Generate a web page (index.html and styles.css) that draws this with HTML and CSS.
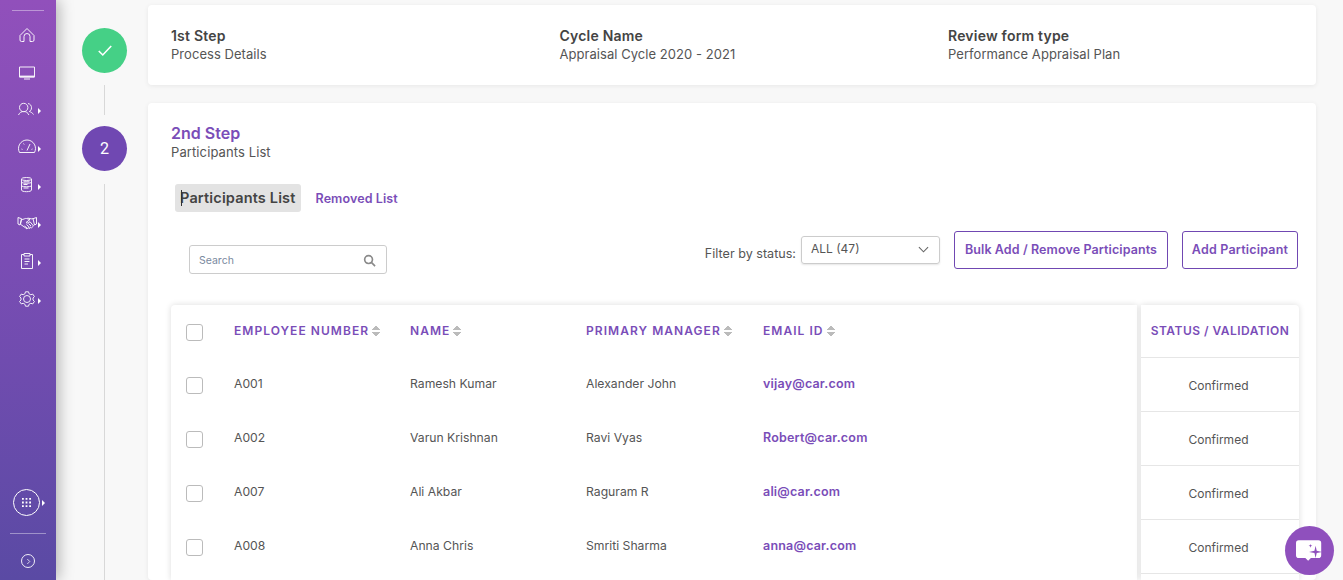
FILE: index.html
```html
<!DOCTYPE html>
<html lang="en">
<head>
<meta charset="utf-8">
<title>Participants</title>
<link rel="stylesheet" href="styles.css">
</head>
<body>
<div class="app">
  <nav class="sidebar">
    <div class="rule rule-top"></div>
    <ul class="nav-list">
      <li class="nav-item"><svg class="ico" viewBox="0 0 20 20"><path d="M3 10.500 10 3.500l7 7V15a1.500 1.500 0 0 1-1.500 1.500H13v-5a3 3 0 0 0-6 0v5H4.500A1.500 1.500 0 0 1 3 15z"/></svg></li>
      <li class="nav-item"><svg class="ico" viewBox="0 0 20 20"><path d="M2.500 4h15v10h-15z"/><path class="thick" d="M2.500 13.500h15"/><path d="M7 16h6"/></svg></li>
      <li class="nav-item has-sub"><svg class="ico" viewBox="0 0 20 20"><circle cx="6.700" cy="6.500" r="4.200"/><path d="M1.500 14c1-2.500 3-3.500 5.200-3.500s4.200 1 5.200 3.500M11 2.500c2.500.5 3.500 2.300 3.500 4.300s-1 3.200-2.200 3.700c1.800.5 3.200 1.500 4.200 3"/></svg><span class="caret"></span></li>
      <li class="nav-item has-sub"><svg class="ico" viewBox="0 0 20 20"><path d="M2.500 13.500A8.500 8.500 0 1 1 17.500 13.500z"/><path d="M10 11.500 13 5M4.500 10l1 .4M6.500 4.500l.7 1M15.500 10l-1 .4"/></svg><span class="caret"></span></li>
      <li class="nav-item has-sub"><svg class="ico" viewBox="0 0 20 20"><ellipse cx="9.500" cy="2" rx="5" ry="1.500"/><path d="M4.500 2v11c0 1 2.200 1.700 5 1.700s5-.7 5-1.700V2M4.500 5.500c1.500 1 8.500 1 10 0M4.500 9c1.500 1 8.500 1 10 0M6.500 7.500h4M6.500 4.800h6M6.500 11h5"/></svg><span class="caret"></span></li>
      <li class="nav-item has-sub"><svg class="ico" viewBox="0 0 20 20"><path d="M1 2.500l3.500 1.200L3 10 1 9zM19.500 2.500 16 3.700 17.500 10l2-1zM4.500 4.500C6.500 4.800 8 3 9.500 3.500L13 4.500 9 7.500c1 1 2.500.5 4-.8l3.500 4.300-2 1.800-1-.8-.8 1.500-1.700-.8-1 1.300-1.500-1.200-5-3.500zM16 3.700c-2 .5-4-.7-5.500-.5M7.500 11l2.500 2M9.500 9.500l3 2.800M11.500 8.500l2.500 2.500"/></svg><span class="caret"></span></li>
      <li class="nav-item has-sub"><svg class="ico" viewBox="0 0 20 20"><path d="M7 1.500H4.500v14h11v-14H13"/><path d="M7 .5h6v2.500H7zM7.500 6h5M7.500 8.500h5M7.500 11h3.500"/></svg><span class="caret"></span></li>
      <li class="nav-item has-sub"><svg class="ico" viewBox="0 0 20 20"><path d="M8.500 .8h3l.6 2 1.700.9 2-.6 1.600 2.500L16 7v2l1.400 1.400-1.600 2.500-2-.6-1.700.9-.6 2h-3l-.6-2-1.700-.9-2 .6-1.600-2.500L4 9V7L2.600 5.600l1.600-2.500 2 .6 1.700-.9z"/><circle cx="10" cy="8" r="3.500"/></svg><span class="caret"></span></li>
    </ul>
    <div class="apps">
      <span class="apps-ring">
        <svg class="dots" viewBox="0 0 10 10"><path d="M0 0h2v2H0zM4 0h2v2H4zM8 0h2v2H8zM0 4h2v2H0zM4 4h2v2H4zM8 4h2v2H8zM0 8h2v2H0zM4 8h2v2H4zM8 8h2v2H8z"/></svg>
      </span>
      <span class="caret"></span>
    </div>
    <div class="rule rule-bottom"></div>
    <span class="expand"><svg viewBox="0 0 8 10"><path d="M2 1l4 4-4 4"/></svg></span>
  </nav>

  <main class="content">
    <section class="step step-done">
      <div class="rail">
        <span class="badge badge-done"><svg viewBox="0 0 18 14"><path d="M2 7.500l4.500 4.500L16 2"/></svg></span>
        <span class="rail-line"></span>
      </div>
      <div class="card summary">
        <div class="summary-item"><h3>1st Step</h3><p>Process Details</p></div>
        <div class="summary-item"><h3>Cycle Name</h3><p>Appraisal Cycle 2020 - 2021</p></div>
        <div class="summary-item"><h3>Review form type</h3><p>Performance Appraisal Plan</p></div>
      </div>
    </section>

    <section class="step step-active">
      <div class="rail">
        <span class="badge badge-active">2</span>
        <span class="rail-line"></span>
      </div>
      <div class="card detail">
        <h2>2nd Step</h2>
        <p class="detail-sub">Participants List</p>
        <div class="tabs">
          <span class="tab tab-on"><span class="text-caret"></span>Participants List</span>
          <span class="tab">Removed List</span>
        </div>
        <div class="toolbar">
          <label class="search">
            <span class="search-text">Search</span>
            <svg viewBox="0 0 14 14"><circle cx="6" cy="6" r="4.200"/><path d="M9 9l4 4"/></svg>
          </label>
          <span class="filter-label">Filter by status:</span>
          <span class="select">ALL (47)<svg viewBox="0 0 12 7"><path d="M1 1l5 5 5-5"/></svg></span>
          <button class="btn btn-bulk">Bulk Add / Remove Participants</button>
          <button class="btn btn-add">Add Participant</button>
        </div>
        <div class="table-wrap">
          <div class="table-main">
            <div class="row row-head">
              <span class="check"></span>
              <span class="th">EMPLOYEE NUMBER<i class="sort"></i></span>
              <span class="th">NAME<i class="sort"></i></span>
              <span class="th">PRIMARY MANAGER<i class="sort"></i></span>
              <span class="th">EMAIL ID<i class="sort"></i></span>
            </div>
            <div class="row"><span class="check"></span><span>A001</span><span>Ramesh Kumar</span><span>Alexander John</span><span class="email">vijay@car.com</span></div>
            <div class="row"><span class="check"></span><span>A002</span><span>Varun Krishnan</span><span>Ravi Vyas</span><span class="email">Robert@car.com</span></div>
            <div class="row"><span class="check"></span><span>A007</span><span>Ali Akbar</span><span>Raguram R</span><span class="email">ali@car.com</span></div>
            <div class="row"><span class="check"></span><span>A008</span><span>Anna Chris</span><span>Smriti Sharma</span><span class="email">anna@car.com</span></div>
          </div>
          <div class="table-side">
            <div class="side-head">STATUS / VALIDATION</div>
            <div class="side-cell">Confirmed</div>
            <div class="side-cell">Confirmed</div>
            <div class="side-cell">Confirmed</div>
            <div class="side-cell">Confirmed</div>
          </div>
        </div>
      </div>
    </section>
  </main>

  <button class="chat" aria-label="Chat">
    <svg viewBox="0 0 30 24"><path class="bubble" d="M3 1h21a3 3 0 0 1 3 3v13a3 3 0 0 1-3 3H16l-3 3-3-3H3a3 3 0 0 1-3-3V4a3 3 0 0 1 3-3z"/><path class="spark" d="M21 7l1.200 5.300 5.800 1.200-5.800 1.200L21 20l-1.200-5.300-5.800-1.200 5.800-1.200z"/><path class="spark" d="M15.500 5l.5 1.500 1.500.5-1.500.5-.5 1.500-.5-1.500-1.500-.5 1.500-.5z"/></svg>
  </button>
</div>
</body>
</html>
```

FILE: styles.css
```css
* { box-sizing: border-box; }
html, body { margin: 0; height: 100%; overflow: hidden; }
body {
  font-family: "Inter", "Liberation Sans", sans-serif;
  color: #444;
  background: #f8f8f8;
}
h2, h3, p, ul { margin: 0; padding: 0; }
ul { list-style: none; }

.app { position: relative; display: flex; height: 580px; overflow: hidden; }

/* sidebar */
.sidebar {
  flex: 0 0 56px;
  display: flex;
  flex-direction: column;
  align-items: center;
  padding-top: 10px;
  background: linear-gradient(180deg, #9150bb 0%, #7a4db4 45%, #5a4aa4 100%);
  box-shadow: 3px 0 14px rgba(0, 0, 0, .28);
  z-index: 2;
}
.rule { height: 1px; background: rgba(255, 255, 255, .4); }
.rule-top { width: 32px; }
.nav-list { margin-top: 5.500px; width: 100%; }
.nav-item {
  position: relative;
  height: 37.900px;
  display: flex;
  align-items: center;
  justify-content: center;
  padding-right: 2px;
}
.ico { width: 20px; height: 20px; fill: none; stroke: #fff; stroke-width: 1; opacity: .92; overflow: visible; }
.ico .thick { stroke-width: 1.800; }
.caret {
  width: 0;
  height: 0;
  border-left: 3px solid #fff;
  border-top: 3px solid transparent;
  border-bottom: 3px solid transparent;
}
.nav-item .caret { position: absolute; left: 38px; top: 16px; }
.apps { margin-top: auto; display: flex; align-items: center; gap: 2px; padding-left: 2px; margin-bottom: 17px; }
.apps-ring {
  width: 27px;
  height: 27px;
  border: 1px solid #fff;
  border-radius: 50%;
  display: flex;
  align-items: center;
  justify-content: center;
}
.apps .caret { border-left-width: 3px; }
.dots { width: 9px; height: 9px; fill: #fff; }
.rule-bottom { width: 36px; margin-bottom: 20px; }
.expand {
  width: 14px;
  height: 14px;
  margin-bottom: 12px;
  border: 1px solid rgba(255, 255, 255, .9);
  border-radius: 50%;
  display: flex;
  align-items: center;
  justify-content: center;
}
.expand svg { width: 5px; height: 7px; fill: none; stroke: #fff; stroke-width: 1.200; }

/* content */
.content {
  flex: 1;
  min-width: 0;
  padding: 5px 27px 0 26px;
  display: flex;
  flex-direction: column;
  gap: 18px;
}
.step { display: flex; }
.step-active { flex: 1; min-height: 0; }
.rail {
  flex: 0 0 45px;
  margin-right: 21px;
  display: flex;
  flex-direction: column;
  align-items: center;
}
.step-done .rail { padding-top: 23px; margin-bottom: -30px; }
.step-done .rail-line { height: 30px; margin-top: 12px; }
.step-active .rail { padding-top: 23px; }
.step-active .rail-line { flex: 1; margin-top: 13px; }
.badge {
  flex: none;
  width: 45px;
  height: 45px;
  border-radius: 50%;
  display: flex;
  align-items: center;
  justify-content: center;
  color: #fff;
  font-size: 16px;
  font-family: "Roboto", sans-serif;
}
.badge-done { background: #45d086; }
.badge-done svg { width: 16px; height: 13px; fill: none; stroke: #fff; stroke-width: 1.800; }
.badge-active { background: #7048b2; }
.rail-line { width: 1px; background: #d8d8d8; display: block; }

.card {
  flex: 1;
  min-width: 0;
  background: #fff;
  border-radius: 4px;
  box-shadow: 0 1px 5px rgba(0, 0, 0, .07);
}
.summary {
  height: 80px;
  padding: 22px 23px 0;
  display: grid;
  grid-template-columns: 388.500px 388.500px 1fr;
}
.summary h3 { font-size: 14px; font-weight: 600; letter-spacing: .2px; color: #444; line-height: 17px; }
.summary p { font-size: 13px; letter-spacing: .05px; line-height: 20px; color: #555; }

.detail { padding: 21px 18px 0 23px; display: flex; flex-direction: column; min-height: 0; overflow: hidden; }
.detail h2 { font-size: 16px; font-weight: 600; color: #7a4db8; line-height: 19px; }
.detail-sub { font-size: 13px; letter-spacing: .1px; color: #555; line-height: 18px; }
.tabs { margin-top: 23px; margin-left: 4px; display: flex; align-items: center; gap: 15px; }
.tab { font-size: 12.500px; letter-spacing: .1px; font-weight: 600; color: #7a4db8; }
.tab-on {
  position: relative;
  background: #e3e3e3;
  color: #444;
  font-size: 14.500px;
  letter-spacing: .16px;
  line-height: 28px;
  padding: 0 5px;
  border-radius: 3px;
}
.text-caret { position: absolute; left: 6px; top: 6px; width: 1px; height: 16px; background: #333; }

.toolbar { display: flex; align-items: flex-start; margin-top: 19px; height: 38px; }
.search {
  margin: 14px 0 0 18px;
  width: 198px;
  height: 29px;
  border: 1px solid #ccc;
  border-radius: 3px;
  display: flex;
  align-items: center;
  justify-content: space-between;
  padding: 1px 10px 0 9px;
}
.search-text { font-size: 10.500px; color: #7a8aa0; }
.search svg { width: 13px; height: 13px; fill: none; stroke: #8a8a8a; stroke-width: 1.800; }
.filter-label { margin: 14px 0 0 auto; font-size: 12.600px; color: #555; line-height: 17px; }
.select {
  margin: 5px 14px 0 5px;
  width: 139px;
  height: 28px;
  border: 1px solid #ccc;
  border-radius: 3px;
  box-shadow: 0 1px 2px rgba(0, 0, 0, .1);
  font-size: 12px;
  color: #555;
  display: flex;
  align-items: center;
  justify-content: space-between;
  padding: 0 10px 3px 9px;
}
.select svg { width: 11px; height: 7px; fill: none; stroke: #666; stroke-width: 1.200; margin-top: 2px; }
.btn {
  height: 38px;
  background: #fff;
  border: 1px solid #7048b2;
  border-radius: 3px;
  color: #7a4db8;
  font: 600 12.500px "Inter", "Liberation Sans", sans-serif;
  padding: 0 0 2px;
}
.btn-bulk { width: 214px; margin-right: 14px; letter-spacing: .1px; }
.btn-add { width: 116px; letter-spacing: .2px; }

.table-wrap { margin-top: 36px; display: flex; flex: 1; min-height: 0; }
.table-main {
  flex: 0 0 966px;
  background: #fff;
  border-radius: 4px 0 0 0;
  box-shadow: 0 0 6px rgba(0, 0, 0, .14);
}
.row {
  display: grid;
  grid-template-columns: 63px 176px 176px 177px 1fr;
  align-items: center;
  height: 54px;
  padding-bottom: 3px;
  font-size: 12.200px;
  color: #555;
}
.row-head { height: 53px; padding-bottom: 2px; }
.row .check { margin: 3.500px 0 0 15px; }
.row-head .check { margin-top: 4px; }
.check {
  width: 17px;
  height: 17px;
  border: 1px solid #bbb;
  border-radius: 3px;
  background: #fff;
}
.th {
  color: #7a4db8;
  font-weight: 600;
  font-size: 12px;
  letter-spacing: 1.050px;
  display: flex;
  align-items: center;
  gap: 3px;
}
.sort {
  display: inline-block;
  width: 8px;
  height: 12px;
  background:
    linear-gradient(to bottom right, transparent 50%, #bbb 50%) left top / 50% 5px no-repeat,
    linear-gradient(to bottom left, transparent 50%, #bbb 50%) right top / 50% 5px no-repeat,
    linear-gradient(to top right, transparent 50%, #bbb 50%) left bottom / 50% 5px no-repeat,
    linear-gradient(to top left, transparent 50%, #bbb 50%) right bottom / 50% 5px no-repeat;
}
.email { color: #7a4db8; font-weight: 600; font-size: 12.500px; letter-spacing: .2px; }

.table-side {
  flex: 0 0 158px;
  margin-left: 4px;
  background: #fff;
  border-radius: 0 4px 0 0;
  box-shadow: 0 0 6px rgba(0, 0, 0, .14);
  text-align: center;
}
.side-head {
  height: 53px;
  line-height: 52px;
  border-bottom: 1px solid #e6e6e6;
  color: #7a4db8;
  font-weight: 600;
  font-size: 12px;
  letter-spacing: .47px;
}
.side-cell {
  height: 54px;
  line-height: 55px;
  padding-right: 3px;
  border-bottom: 1px solid #e6e6e6;
  font-size: 12px;
  color: #555;
}

/* chat */
.chat {
  position: absolute;
  right: 9px;
  bottom: 5px;
  width: 49px;
  height: 49px;
  border: 0;
  border-radius: 50%;
  background: #8f50bd;
  display: flex;
  align-items: center;
  justify-content: center;
  padding: 0;
  z-index: 3;
}
.chat svg { width: 28px; height: 23px; }
.bubble { fill: #fff; }
.spark { fill: #8f50bd; }
```
